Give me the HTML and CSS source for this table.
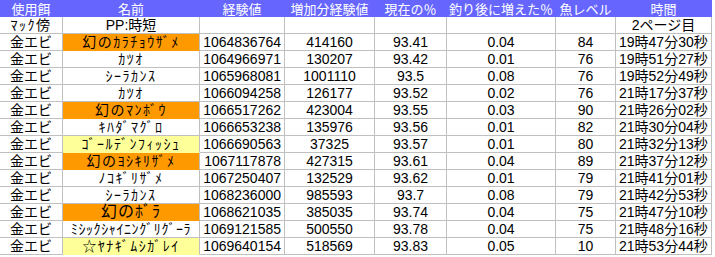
FILE: index.html
```html
<!DOCTYPE html>
<html lang="ja">
<head>
<meta charset="utf-8">
<title>釣り記録</title>
<link rel="stylesheet" href="styles.css">
</head>
<body>
<div class="sheet">
  <div class="row head">
    <div class="c ctr">使用餌</div>
    <div class="c ctr">名前</div>
    <div class="c ctr">経験値</div>
    <div class="c ctr">増加分経験値</div>
    <div class="c ctr">現在の％</div>
    <div class="c ctr">釣り後に増えた％</div>
    <div class="c ctr">魚レベル</div>
    <div class="c ctr">時間</div>
  </div>
  <div class="row">
    <div class="c ctr hw">ﾏｯｸ傍</div>
    <div class="c ctr">PP:時短</div>
    <div class="c"></div>
    <div class="c"></div>
    <div class="c"></div>
    <div class="c"></div>
    <div class="c"></div>
    <div class="c ctr">2ページ目</div>
  </div>
  <div class="row">
    <div class="c ctr">金エビ</div>
    <div class="c ctr hw orange">幻のｶﾗﾁｮｳｻﾞﾒ</div>
    <div class="c num">1064836764</div>
    <div class="c ctr">414160</div>
    <div class="c ctr">93.41</div>
    <div class="c ctr">0.04</div>
    <div class="c ctr">84</div>
    <div class="c time">19時47分30秒</div>
  </div>
  <div class="row">
    <div class="c ctr">金エビ</div>
    <div class="c ctr hw">ｶﾂｵ</div>
    <div class="c num">1064966971</div>
    <div class="c ctr">130207</div>
    <div class="c ctr">93.42</div>
    <div class="c ctr">0.01</div>
    <div class="c ctr">76</div>
    <div class="c time">19時51分27秒</div>
  </div>
  <div class="row">
    <div class="c ctr">金エビ</div>
    <div class="c ctr hw">ｼｰﾗｶﾝｽ</div>
    <div class="c num">1065968081</div>
    <div class="c ctr">1001110</div>
    <div class="c ctr">93.5</div>
    <div class="c ctr">0.08</div>
    <div class="c ctr">76</div>
    <div class="c time">19時52分49秒</div>
  </div>
  <div class="row">
    <div class="c ctr">金エビ</div>
    <div class="c ctr hw">ｶﾂｵ</div>
    <div class="c num">1066094258</div>
    <div class="c ctr">126177</div>
    <div class="c ctr">93.52</div>
    <div class="c ctr">0.02</div>
    <div class="c ctr">76</div>
    <div class="c time">21時17分37秒</div>
  </div>
  <div class="row">
    <div class="c ctr">金エビ</div>
    <div class="c ctr hw orange">幻のﾏﾝﾎﾞｳ</div>
    <div class="c num">1066517262</div>
    <div class="c ctr">423004</div>
    <div class="c ctr">93.55</div>
    <div class="c ctr">0.03</div>
    <div class="c ctr">90</div>
    <div class="c time">21時26分02秒</div>
  </div>
  <div class="row">
    <div class="c ctr">金エビ</div>
    <div class="c ctr hw">ｷﾊﾀﾞﾏｸﾞﾛ</div>
    <div class="c num">1066653238</div>
    <div class="c ctr">135976</div>
    <div class="c ctr">93.56</div>
    <div class="c ctr">0.01</div>
    <div class="c ctr">82</div>
    <div class="c time">21時30分04秒</div>
  </div>
  <div class="row">
    <div class="c ctr">金エビ</div>
    <div class="c ctr hw yellow">ｺﾞｰﾙﾃﾞﾝﾌｨｯｼｭ</div>
    <div class="c num">1066690563</div>
    <div class="c ctr">37325</div>
    <div class="c ctr">93.57</div>
    <div class="c ctr">0.01</div>
    <div class="c ctr">80</div>
    <div class="c time">21時32分13秒</div>
  </div>
  <div class="row">
    <div class="c ctr">金エビ</div>
    <div class="c ctr hw orange">幻のﾖｼｷﾘｻﾞﾒ</div>
    <div class="c num">1067117878</div>
    <div class="c ctr">427315</div>
    <div class="c ctr">93.61</div>
    <div class="c ctr">0.04</div>
    <div class="c ctr">89</div>
    <div class="c time">21時37分12秒</div>
  </div>
  <div class="row">
    <div class="c ctr">金エビ</div>
    <div class="c ctr hw">ﾉｺｷﾞﾘｻﾞﾒ</div>
    <div class="c num">1067250407</div>
    <div class="c ctr">132529</div>
    <div class="c ctr">93.62</div>
    <div class="c ctr">0.01</div>
    <div class="c ctr">79</div>
    <div class="c time">21時41分01秒</div>
  </div>
  <div class="row">
    <div class="c ctr">金エビ</div>
    <div class="c ctr hw">ｼｰﾗｶﾝｽ</div>
    <div class="c num">1068236000</div>
    <div class="c ctr">985593</div>
    <div class="c ctr">93.7</div>
    <div class="c ctr">0.08</div>
    <div class="c ctr">79</div>
    <div class="c time">21時42分53秒</div>
  </div>
  <div class="row">
    <div class="c ctr">金エビ</div>
    <div class="c ctr hw big orange">幻のﾎﾞﾗ</div>
    <div class="c num">1068621035</div>
    <div class="c ctr">385035</div>
    <div class="c ctr">93.74</div>
    <div class="c ctr">0.04</div>
    <div class="c ctr">75</div>
    <div class="c time">21時47分10秒</div>
  </div>
  <div class="row">
    <div class="c ctr">金エビ</div>
    <div class="c ctr hw tight">ﾐｼｯｸｼｬｲﾆﾝｸﾞﾘｸﾞｰﾗ</div>
    <div class="c num">1069121585</div>
    <div class="c ctr">500550</div>
    <div class="c ctr">93.78</div>
    <div class="c ctr">0.04</div>
    <div class="c ctr">75</div>
    <div class="c time">21時48分16秒</div>
  </div>
  <div class="row">
    <div class="c ctr">金エビ</div>
    <div class="c ctr hw yellow">☆ﾔﾅｷﾞﾑｼｶﾞﾚｲ</div>
    <div class="c num">1069640154</div>
    <div class="c ctr">518569</div>
    <div class="c ctr">93.83</div>
    <div class="c ctr">0.05</div>
    <div class="c ctr">10</div>
    <div class="c time">21時53分44秒</div>
  </div>
</div>
</body>
</html>
```
FILE: styles.css
```css
html, body {
  margin: 0;
  padding: 0;
  background: #ffffff;
}

body {
  font-family: "Liberation Sans", "Noto Sans CJK JP", sans-serif;
  font-size: 14px;
  color: #000000;
}

.sheet {
  width: 712px;
  display: flex;
  flex-direction: column;
}

.row {
  display: grid;
  grid-template-columns: 63px 137px 85px 90px 72px 109px 60px 96px;
  height: 17px;
}

.c {
  box-sizing: border-box;
  height: 17px;
  border-right: 1px solid #c0c0c0;
  border-bottom: 1px solid #c0c0c0;
  display: flex;
  align-items: center;
  white-space: nowrap;
  line-height: 16px;
}

.head .c {
  background: #6666ff;
  color: #ffffff;
  border-color: #6666ff;
  font-size: 13px;
  padding-top: 2px;
  font-family: "Noto Sans CJK JP", sans-serif;
}

.ctr {
  justify-content: center;
}

.num {
  justify-content: flex-end;
  padding-right: 3px;
}

.time {
  justify-content: flex-start;
  padding-left: 3px;
}

.hw {
  font-size: 14px;
  letter-spacing: 1.5px;
}

.tight {
  letter-spacing: 0.6px;
}

.big {
  font-size: 16px;
  letter-spacing: 1px;
}

.orange {
  background: #ff9900;
  border-bottom-color: #ff9900;
}

.yellow {
  background: #ffff99;
  border-bottom-color: #ffff99;
}
```
